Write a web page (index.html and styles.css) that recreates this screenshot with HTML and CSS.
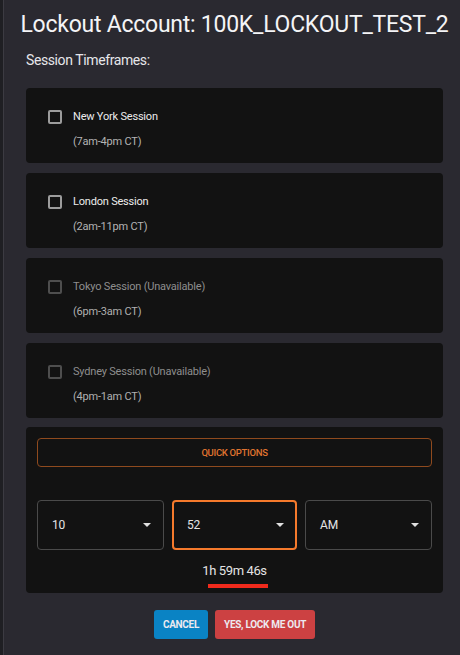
FILE: index.html
```html
<!DOCTYPE html>
<html>
<head>
<meta charset="utf-8">
<link rel="stylesheet" href="styles.css">
</head>
<body>
<div class="frame">
  <div class="edge"></div>
  <div class="dialog">
    <h1 class="title">Lockout Account: 100K_LOCKOUT_TEST_2</h1>
    <div class="section-label">Session Timeframes:</div>
    <div class="cards">
      <div class="card">
        <div class="row"><span class="box"></span><span class="name">New York Session</span></div>
        <div class="sub">(7am-4pm CT)</div>
      </div>
      <div class="card">
        <div class="row"><span class="box"></span><span class="name">London Session</span></div>
        <div class="sub">(2am-11pm CT)</div>
      </div>
      <div class="card disabled">
        <div class="row"><span class="box"></span><span class="name">Tokyo Session (Unavailable)</span></div>
        <div class="sub">(6pm-3am CT)</div>
      </div>
      <div class="card disabled">
        <div class="row"><span class="box"></span><span class="name">Sydney Session (Unavailable)</span></div>
        <div class="sub">(4pm-1am CT)</div>
      </div>
      <div class="card time-card">
        <button class="quick">QUICK OPTIONS</button>
        <div class="selects">
          <div class="select"><span>10</span><span class="arrow"></span></div>
          <div class="select focused"><span>52</span><span class="arrow"></span></div>
          <div class="select"><span>AM</span><span class="arrow"></span></div>
        </div>
        <div class="countdown">1h 59m 46s</div>
        <div class="bar"></div>
      </div>
    </div>
    <div class="actions">
      <button class="btn cancel">CANCEL</button>
      <button class="btn confirm">YES, LOCK ME OUT</button>
    </div>
  </div>
</div>
</body>
</html>
```
FILE: styles.css
```css
* { box-sizing: border-box; }
html, body { margin: 0; padding: 0; }
body {
  background: #2a2930;
  font-family: Roboto, "Liberation Sans", sans-serif;
  color: #f0f0f0;
  width: 460px;
  height: 655px;
  overflow: hidden;
}
.frame { display: flex; height: 655px; }
.edge {
  width: 4px;
  flex: none;
  background: #1f1f23;
  border-right: 1px solid #3c3b42;
}
.dialog {
  flex: 1;
  min-width: 0;
  padding: 11px 17px 0 22px;
  display: flex;
  flex-direction: column;
}
.title {
  margin: 0 -20px;
  font-size: 23px;
  line-height: 28px;
  font-weight: 400;
  letter-spacing: -0.25px;
  text-align: center;
  white-space: nowrap;
  color: #f4f4f6;
}
.section-label {
  margin-top: 11px;
  font-size: 14px;
  line-height: 20px;
  letter-spacing: -0.4px;
  color: #e6e6ea;
}
.cards {
  margin-top: 18px;
  display: flex;
  flex-direction: column;
  gap: 10px;
}
.card {
  background: #121212;
  border-radius: 4px;
  padding: 20px 22px 12px;
}
.row { display: flex; align-items: center; height: 18px; }
.box {
  width: 14px;
  height: 14px;
  border: 2px solid #9c9c9c;
  border-radius: 2px;
  margin-right: 11px;
  flex: none;
}
.name { font-size: 11px; line-height: 18px; letter-spacing: -0.2px; color: #ececec; }
.sub {
  margin-top: 7px;
  padding-left: 25px;
  font-size: 11px;
  line-height: 18px;
  letter-spacing: -0.2px;
  color: #b4b4b4;
}
.disabled .box { border-color: #4e4e4e; }
.disabled .name { color: #8e8e8e; }
.disabled .sub { color: #b0b0b0; }

.time-card {
  padding: 11px 11px 5px;
  margin-top: -1px;
  height: 166px;
}
.quick {
  display: block;
  width: 100%;
  height: 29px;
  background: transparent;
  border: 1px solid #8f4a1e;
  border-radius: 4px;
  color: #e07430;
  font-family: Roboto, "Liberation Sans", sans-serif;
  font-size: 9.5px;
  font-weight: 500;
  letter-spacing: -0.3px;
  padding: 0;
}
.selects {
  margin-top: 33px;
  display: grid;
  grid-template-columns: 127px 125px 127px;
  gap: 0 8px;
  justify-content: space-between;
}
.select {
  height: 50px;
  border: 1px solid #4a4a4a;
  border-radius: 4px;
  display: flex;
  align-items: center;
  justify-content: space-between;
  padding: 0 12px 0 14px;
  font-size: 12px;
  letter-spacing: -0.2px;
  color: #e4e4e4;
}
.select.focused {
  border: 2px solid #f57a2c;
  padding: 0 11px 0 13px;
}
.arrow {
  width: 0;
  height: 0;
  border-left: 4px solid transparent;
  border-right: 4px solid transparent;
  border-top: 4px solid #e0e0e0;
}
.countdown {
  margin-top: 11px;
  text-align: center;
  font-size: 13px;
  line-height: 20px;
  letter-spacing: -0.4px;
  color: #e4e4e4;
}
.bar {
  margin: 3px 0 0 calc(50% - 27px);
  width: 60px;
  height: 4px;
  background: #ef2a1c;
}
.actions {
  margin-top: 17px;
  display: flex;
  justify-content: center;
  gap: 7px;
}
.btn {
  height: 29px;
  border: none;
  border-radius: 3px;
  padding: 0 9px;
  font-family: Roboto, "Liberation Sans", sans-serif;
  font-size: 10px;
  font-weight: 700;
  letter-spacing: -0.3px;
  color: #eceaf0;
}
.cancel { background: #0a83c4; }
.confirm { background: #cc4142; }
```
